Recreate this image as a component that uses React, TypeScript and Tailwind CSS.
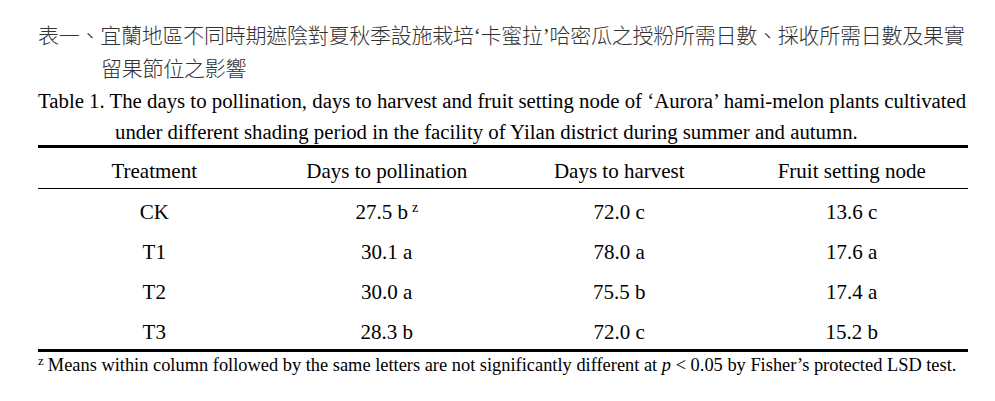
import React from "react";

const rows: [string, React.ReactNode, string, string][] = [
  ["CK", <>27.5 b<sup className="ml-[4px] text-[14px] -top-[7px]">z</sup></>, "72.0 c", "13.6 c"],
  ["T1", "30.1 a", "78.0 a", "17.6 a"],
  ["T2", "30.0 a", "75.5 b", "17.4 a"],
  ["T3", "28.3 b", "72.0 c", "15.2 b"],
];

export default function App() {
  return (
    <div className="w-[995px] h-[401px] bg-white overflow-hidden font-['Liberation_Serif','Times_New_Roman',serif] text-black">
      <div className="pl-[38px] pt-[19px] w-[968px]">
        <p className="font-['Noto_Sans_CJK_TC','Noto_Sans_CJK_SC',sans-serif] font-light text-[21px] leading-[31px] text-[#333] whitespace-nowrap tracking-[-0.25px]">
          表一、宜蘭地區不同時期遮陰對夏秋季設施栽培<span className="font-['Liberation_Serif',serif]">‘</span>卡蜜拉<span className="font-['Liberation_Serif',serif]">’</span>哈密瓜之授粉所需日數、採收所需日數及果實
          <br />
          <span className="pl-[63px]">留果節位之影響</span>
        </p>
        <p className="mt-[2px] text-[20.8px] leading-[31px] whitespace-nowrap">
          Table 1. The days to pollination, days to harvest and fruit setting node of ‘Aurora’ hami-melon plants cultivated
          <br />
          <span className="pl-[77px]">under different shading period in the facility of Yilan district during summer and autumn.</span>
        </p>
        <div className="-mt-[2px] h-[3px] bg-black" />
        <div className="grid grid-cols-4 text-center text-[21px] leading-[24px] h-[41px] pt-[11px] border-b border-black">
          <div>Treatment</div>
          <div>Days to pollination</div>
          <div>Days to harvest</div>
          <div>Fruit setting node</div>
        </div>
        {rows.map((r) => (
          <div key={r[0]} className="grid grid-cols-4 text-center text-[21px] leading-[24px] h-[40px] pt-[11px]">
            <div>{r[0]}</div>
            <div>{r[1]}</div>
            <div>{r[2]}</div>
            <div>{r[3]}</div>
          </div>
        ))}
        <div className="h-[3px] bg-black" />
        <p className="mt-[1px] text-[18.4px] leading-[24px] whitespace-nowrap">
          <sup className="text-[13px] -top-[6px] mr-[4px]">z</sup>Means within column followed by the same letters are not significantly different at <i>p</i> &lt; 0.05 by Fisher’s protected LSD test.
        </p>
      </div>
    </div>
  );
}
